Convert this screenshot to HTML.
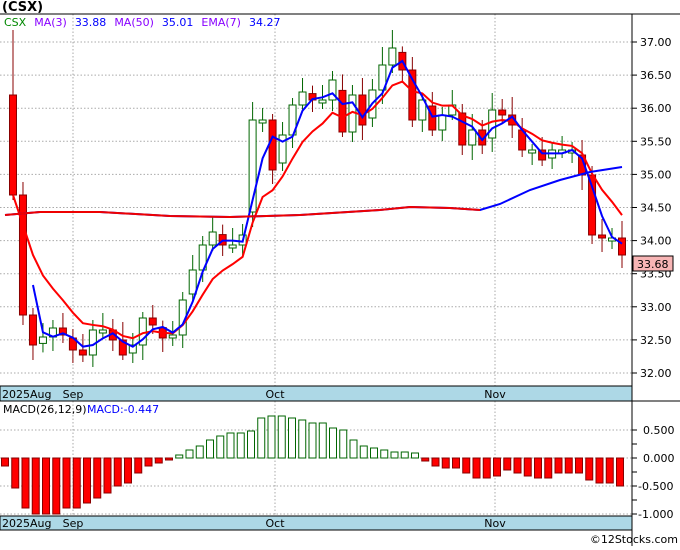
<!DOCTYPE html><html><head><style>body{margin:0;background:#fff;width:680px;height:546px;overflow:hidden;font-family:"DejaVu Sans","Liberation Sans",sans-serif}</style></head><body>
<svg id="s" width="680" height="546" xmlns="http://www.w3.org/2000/svg" font-family="DejaVu Sans, Liberation Sans, sans-serif" font-size="11">
<text x="2" y="11" font-size="13" font-weight="bold">(CSX)</text>
<g id="g"></g>
</svg>
<script>
var s=document.getElementById('g'),h='';
function L(x1,y1,x2,y2,c,w,d){h+='<line x1="'+x1+'" y1="'+y1+'" x2="'+x2+'" y2="'+y2+'" stroke="'+c+'" stroke-width="'+(w||1)+'"'+(d?' stroke-dasharray="1.5,2"':'')+'/>';}
function R(x,y,w,hh,f,st){h+='<rect x="'+x+'" y="'+y+'" width="'+w+'" height="'+hh+'" fill="'+f+'" stroke="'+(st||'none')+'"/>';}
function T(x,y,t,c,a){h+='<text x="'+x+'" y="'+y+'" fill="'+(c||'#000')+'"'+(a?' text-anchor="'+a+'"':'')+'>'+t+'</text>';}
function py(p){return 42+(37-p)*66.2;}
// price grid
for(var p=32;p<=37;p+=0.5){var y=py(p);L(0,y,632,y,'#aaa',1,1);L(632,y,637,y,'#000');T(640,y+4,p.toFixed(2));}
[73,275,495].forEach(function(x){L(x,14,x,386,'#aaa',1,1);L(x,401,x,516,'#aaa',1,1);});
// closes
var c=[195,315,345,337,328,335,350,355,330,330,340,355,345,318,325,338,335,300,270,245,232,245,245,235,120,120,170,135,105,92,100,100,80,132,95,125,90,65,48,70,120,100,130,115,105,145,130,145,110,115,125,150,150,160,150,150,150,175,235,238,238,255];
var n=c.length,sp=(622-13)/(n-1),op=[95];
for(var i=1;i<n;i++)op.push(i%3==0?c[i-1]+(c[i]-c[i-1])*0.2:c[i-1]);
var X=function(i){return 13+i*sp;};
for(var i=0;i<n;i++){var x=X(i),o=op[i],cl=c[i],t=Math.min(o,cl),b=Math.max(o,cl);if(b-t<3)b=t+3;var hi=t-6-(i*7%13),lo=b+5+(i*5%11);if(i==0)hi=30;if(i==38)hi=30;
var red=cl>o;L(x,hi,x,lo,red?'#800':'#060');R(x-3.5,t,7,b-t,red?'#f00':'#fff',red?'#800':'#060');}
// MA3 & EMA7
var m3='',e7='',e=c[0];for(var i=0;i<n;i++){var a=i<2?c[i]:(c[i]+c[i-1]+c[i-2])/3;e=i==0?c[0]:e+(c[i]-e)*0.25;if(i>=2)m3+=X(i)+','+a+' ';e7+=X(i)+','+e+' ';}
h+='<polyline points="'+e7+'" fill="none" stroke="#f00" stroke-width="2"/>';
h+='<polyline points="'+m3+'" fill="none" stroke="#00f" stroke-width="2"/>';
h+='<polyline points="5,215 40,212 100,212 170,216 230,217 300,215 380,210 410,207 450,208 480,210 500,204 530,190 560,180 590,172 622,167" fill="none" stroke="#00f" stroke-width="2"/>';
h+='<polyline points="5,215 40,212 100,212 170,216 230,217 300,215 380,210 410,207 450,208 480,210" fill="none" stroke="#e00" stroke-width="2"/>';
// frame price panel
L(0,14,680,14,'#000');L(632,14,632,546,'#000');
R(0,386,632,15,'#add8e6','#000');T(2,398,'2025Aug');T(73,398,'Sep','#000','middle');T(275,398,'Oct','#000','middle');T(495,398,'Nov','#000','middle');
R(633,256,40,15,'#f7b5b5','#000');T(637,268,'33.68','#000');
h+='<text x="4" y="26"><tspan fill="#080">CSX</tspan><tspan fill="#80f" dx="8">MA(3)</tspan><tspan fill="#00f" dx="8">33.88</tspan><tspan fill="#80f" dx="8">MA(50)</tspan><tspan fill="#00f" dx="8">35.01</tspan><tspan fill="#80f" dx="8">EMA(7)</tspan><tspan fill="#00f" dx="8">34.27</tspan></text>';
// MACD
for(var v=0.5;v>=-1;v-=0.5){var y=458-v*56;L(0,y,632,y,'#aaa',1,1);L(632,y,637,y,'#000');T(643-(v<0?5:0),y+4,v.toFixed(3));}
[444,472,500].forEach(function(y){L(632,y,637,y,'#000');});
var m=[-8,-30,-50,-56,-56,-56,-50,-50,-45,-40,-35,-28,-25,-15,-8,-5,-2,3,8,12,18,22,25,25,27,40,42,42,40,38,35,35,30,28,18,12,10,8,6,6,5,-3,-8,-10,-10,-15,-20,-20,-18,-12,-15,-18,-20,-20,-15,-15,-15,-22,-25,-25,-28];
var ms=(620-5)/(m.length-1);
for(var i=0;i<m.length;i++){var x=5+i*ms,v=m[i];if(v>=0)R(x-3.5,458-v,7,v,'#fff','#060');else R(x-3.5,458,7,-v,'#f00','#800');}
T(3,413,'MACD(26,12,9)','#000');T(87,413,'MACD:-0.447','#00f');
L(0,401,680,401,'#000');
R(0,516,632,14,'#add8e6','#000');T(2,527,'2025Aug');T(73,527,'Sep','#000','middle');T(275,527,'Oct','#000','middle');T(495,527,'Nov','#000','middle');
T(678,543,'©12Stocks.com','#000','end');
s.innerHTML=h;
</script></body></html>
